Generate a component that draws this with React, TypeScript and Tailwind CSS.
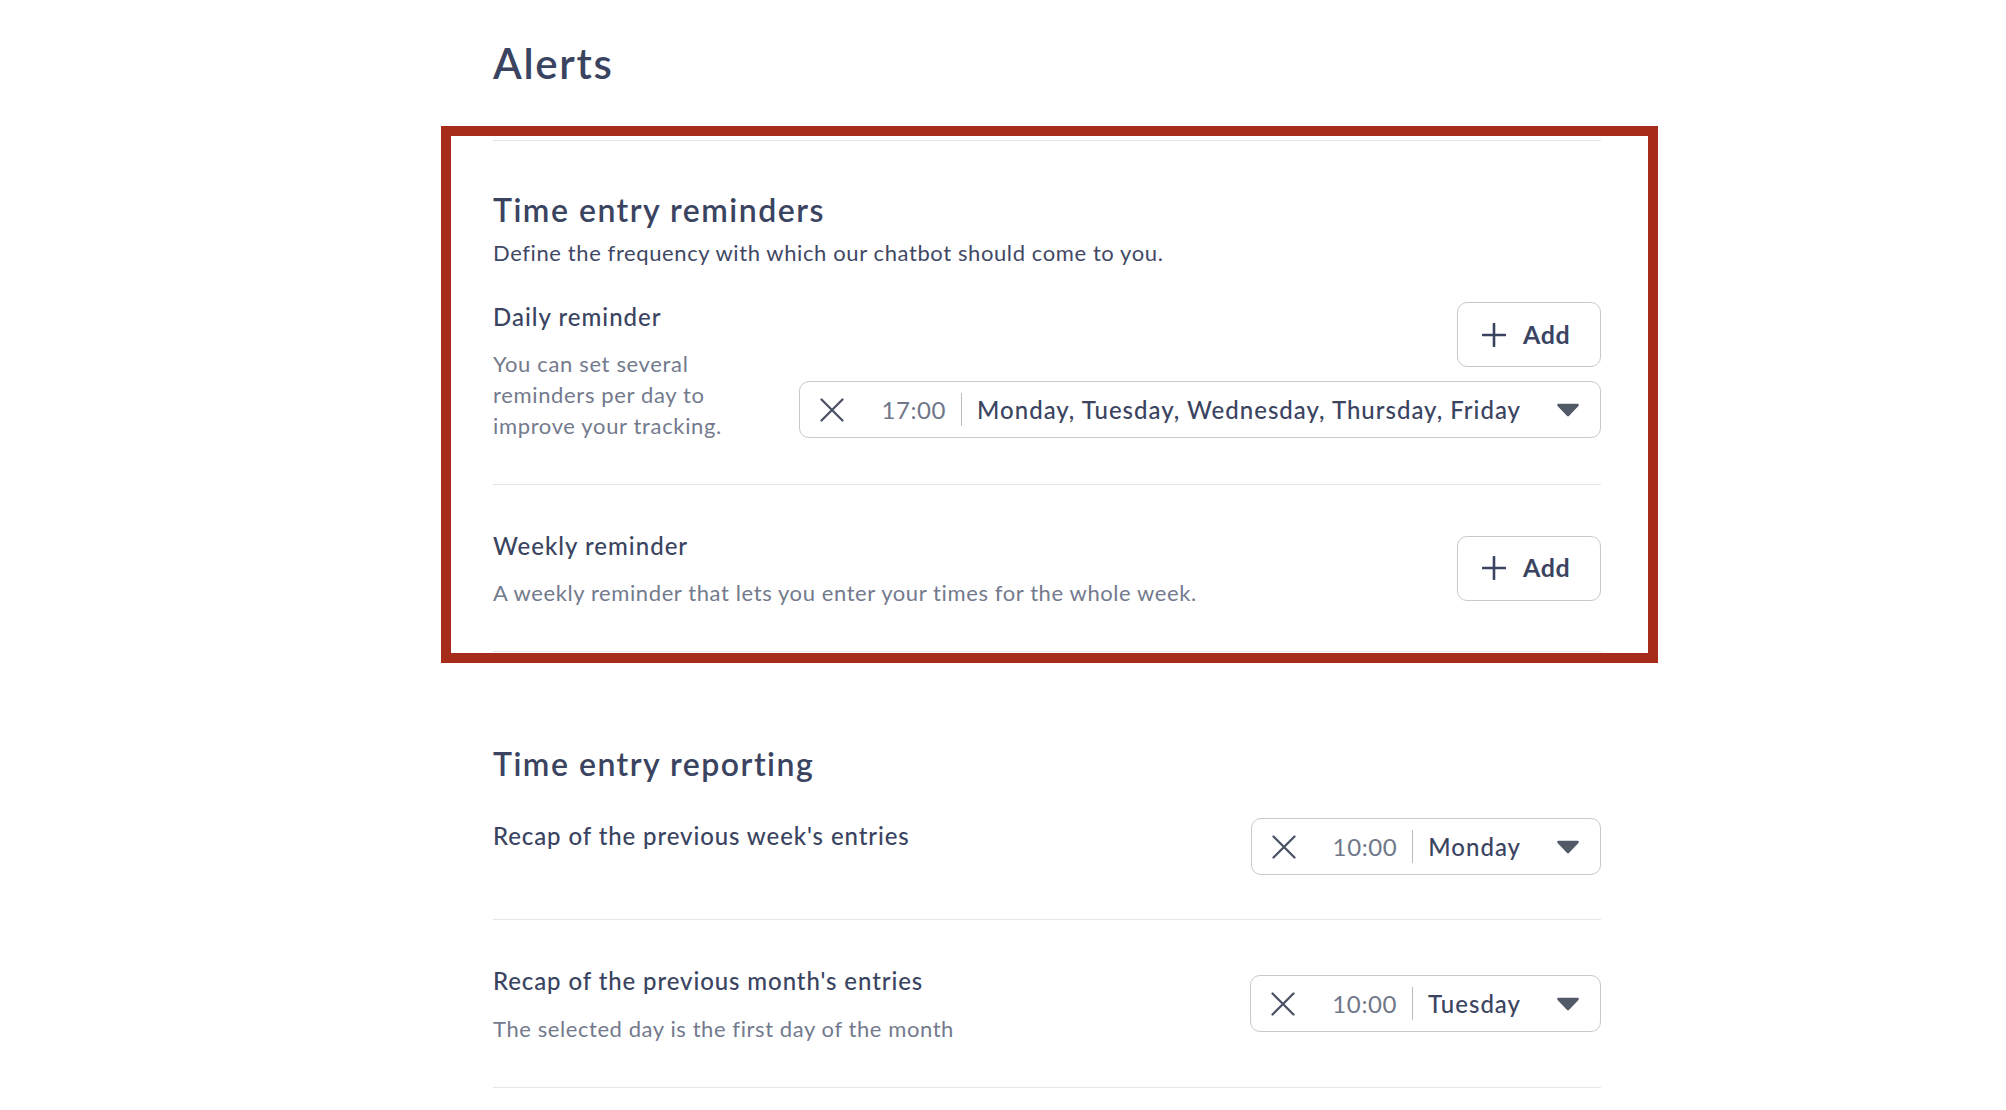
import React from "react";

function CloseIcon() {
  return (
    <svg width="24" height="24" viewBox="0 0 24 24" fill="none" stroke="#4a5264" strokeWidth="2.3" strokeLinecap="round">
      <path d="M1.5 1.5L22.5 22.5M22.5 1.5L1.5 22.5" />
    </svg>
  );
}

function PlusIcon() {
  return (
    <svg width="24" height="24" viewBox="0 0 24 24" fill="none" stroke="#3a4461" strokeWidth="2.6" strokeLinecap="round">
      <path d="M12 1V23M1 12H23" />
    </svg>
  );
}

function Caret() {
  return (
    <svg width="24" height="14" viewBox="0 0 24 14" className="ml-[35px] shrink-0">
      <path d="M2.5 2H21.5L12 12Z" fill="#525a68" stroke="#525a68" strokeWidth="2.6" strokeLinejoin="round" />
    </svg>
  );
}

function AddButton() {
  return (
    <button className="flex h-[65px] w-[144px] items-center gap-[17px] rounded-[10px] border border-[#c6c9cf] bg-white pl-[24px] text-[25px] font-bold tracking-[0.6px] text-[#3a4461]">
      <PlusIcon />
      <span>Add</span>
    </button>
  );
}

function TimeSelect({ time, days }: { time: string; days: string }) {
  return (
    <div className="flex h-[57px] items-center rounded-[10px] border border-[#c6c9cf] bg-white pl-[20px] pr-[20px]">
      <CloseIcon />
      <span className="ml-[37px] text-[24px] leading-none tracking-[0.6px] text-[#707789]">{time}</span>
      <span className="mx-[15px] h-[33px] w-px bg-[#b9bcc3]" />
      <span className="text-[24px] leading-none font-medium tracking-[1px] text-[#3a4461]">{days}</span>
      <Caret />
    </div>
  );
}

export default function App() {
  return (
    <div className="min-h-screen w-full bg-white font-['Lato',sans-serif] text-[#3a4461]">
      <main className="ml-[493px] w-[1108px]">
        <h1 className="pt-[38px] text-[42px] leading-[50px] font-semibold tracking-[1.7px]">Alerts</h1>

        <div className="relative mt-[52px]">
          {/* highlight frame around the reminders block */}
          <div className="pointer-events-none absolute -top-[14px] -bottom-[11px] -left-[52px] -right-[57px] border-[10px] border-[#a72c1a]" />

          <section className="border-t border-b border-[#e5e6ea] pt-[47px]">
            <h2 className="text-[32px] leading-[44px] font-semibold tracking-[1.5px]">Time entry reminders</h2>
            <p className="mt-[6px] text-[22px] leading-[30px] tracking-[0.6px] text-[#3f4865]">
              Define the frequency with which our chatbot should come to you.
            </p>

            <div className="mt-[31px] flex items-center justify-between border-b border-[#e5e6ea] pb-[43px]">
              <div className="w-[250px]">
                <div className="text-[24px] leading-[36px] font-medium tracking-[1px]">Daily reminder</div>
                <p className="mt-[13px] text-[22px] leading-[31px] tracking-[0.65px] text-[#737a8d]">
                  You can set several reminders per day to improve your tracking.
                </p>
              </div>
              <div className="flex flex-col items-end gap-[14px]">
                <AddButton />
                <TimeSelect time="17:00" days="Monday, Tuesday, Wednesday, Thursday, Friday" />
              </div>
            </div>

            <div className="flex items-center justify-between pt-[43px] pb-[43px]">
              <div>
                <div className="text-[24px] leading-[36px] font-medium tracking-[1px]">Weekly reminder</div>
                <p className="mt-[13px] text-[22px] leading-[31px] tracking-[0.6px] text-[#737a8d]">
                  A weekly reminder that lets you enter your times for the whole week.
                </p>
              </div>
              <AddButton />
            </div>
          </section>
        </div>

        <section className="mt-[90px]">
          <h2 className="text-[32px] leading-[44px] font-semibold tracking-[1.5px]">Time entry reporting</h2>

          <div className="mt-[32px] flex items-start justify-between border-b border-[#e5e6ea] pb-[44px]">
            <div className="text-[24px] leading-[36px] font-medium tracking-[0.9px]">Recap of the previous week's entries</div>
            <TimeSelect time="10:00" days="Monday" />
          </div>

          <div className="flex items-center justify-between border-b border-[#e5e6ea] pt-[43px] pb-[43px]">
            <div>
              <div className="text-[24px] leading-[36px] font-medium tracking-[0.9px]">Recap of the previous month's entries</div>
              <p className="mt-[14px] text-[22px] leading-[31px] tracking-[0.58px] text-[#737a8d]">
                The selected day is the first day of the month
              </p>
            </div>
            <TimeSelect time="10:00" days="Tuesday" />
          </div>
        </section>
      </main>
    </div>
  );
}
